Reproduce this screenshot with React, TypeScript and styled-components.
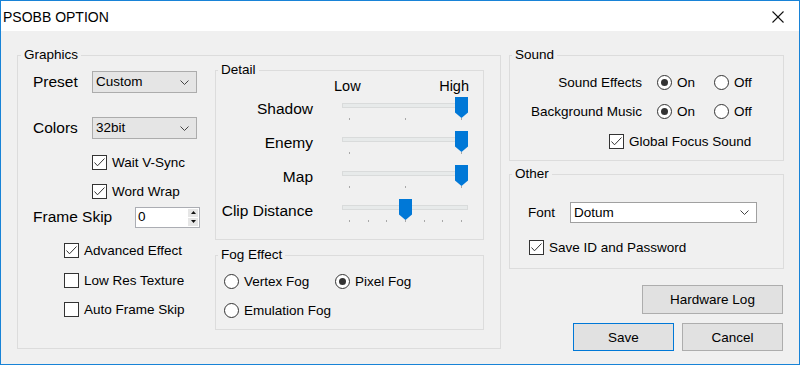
import React from "react";
import styled, { createGlobalStyle } from "styled-components";

const GlobalStyle = createGlobalStyle`
  html, body {
    margin: 0;
    padding: 0;
    background: #f0f0f0;
    overflow: hidden;
  }
  * {
    box-sizing: border-box;
  }
`;

interface SliderProps {
  value: number;
  max: number;
}

const Slider: React.FC<SliderProps> = ({ value, max }) => {
  const center = 7.5 + (value / max) * 112;
  return (
    <Styled_Slider>
      <Styled_Track />
      <Styled_Ticks>
        {Array.from({ length: max + 1 }).map((_, i) => (
          <Styled_Tick key={i} />
        ))}
      </Styled_Ticks>
      <Styled_Thumb style={{ left: center - 6.5 }} />
    </Styled_Slider>
  );
};

const Check: React.FC<{ checked?: boolean; label: string }> = ({
  checked = false,
  label,
}) => (
  <Styled_Option>
    <Styled_CheckBox>
      {checked && (
        <svg width="13" height="13" viewBox="0 0 13 13">
          <polyline
            points="1.5,6.5 4.5,9.8 11.5,2.5"
            fill="none"
            stroke="#333"
            strokeWidth="1"
          />
        </svg>
      )}
    </Styled_CheckBox>
    {label}
  </Styled_Option>
);

const Radio: React.FC<{ on?: boolean; label: string }> = ({
  on = false,
  label,
}) => (
  <Styled_Option>
    <Styled_RadioCircle $on={on} />
    {label}
  </Styled_Option>
);

const Chevron = () => (
  <svg width="9" height="5" viewBox="0 0 9 5">
    <polyline points="0.5,0.5 4.5,4.5 8.5,0.5" fill="none" stroke="#444" strokeWidth="1" />
  </svg>
);

const Select: React.FC<{ value: string; $white?: boolean; width: number }> = ({
  value,
  $white,
  width,
}) => (
  <Styled_Select $white={$white} $width={width}>
    <span>{value}</span>
    <Chevron />
  </Styled_Select>
);

const App: React.FC = () => {
  return (
    <>
      <GlobalStyle />
      <Styled_Window>
        <Styled_TitleBar>
          <span>PSOBB OPTION</span>
          <svg width="12" height="12" viewBox="0 0 12 12">
            <line x1="0.5" y1="0.5" x2="11.5" y2="11.5" stroke="#111" strokeWidth="1.1" />
            <line x1="11.5" y1="0.5" x2="0.5" y2="11.5" stroke="#111" strokeWidth="1.1" />
          </svg>
        </Styled_TitleBar>

        <Styled_Body>
          <Styled_Group $width={484} $height={302}>
            <Styled_Legend $ml={3}>Graphics</Styled_Legend>
            <Styled_GraphicsInner>
              <Styled_LeftColumn>
                <Styled_Row $mt={8} $h={22}>
                  <Styled_BigLabel $w={59}>Preset</Styled_BigLabel>
                  <Select value="Custom" width={105} />
                </Styled_Row>
                <Styled_Row $mt={24} $h={22}>
                  <Styled_BigLabel $w={59}>Colors</Styled_BigLabel>
                  <Select value="32bit" width={105} />
                </Styled_Row>
                <Styled_Row $mt={12} $h={22} $indent={59}>
                  <Check checked label="Wait V-Sync" />
                </Styled_Row>
                <Styled_Row $mt={7} $h={22} $indent={59}>
                  <Check checked label="Word Wrap" />
                </Styled_Row>
                <Styled_Row $mt={4} $h={22}>
                  <Styled_BigLabel $w={102}>Frame Skip</Styled_BigLabel>
                  <Styled_Spin>
                    <Styled_SpinValue>0</Styled_SpinValue>
                    <Styled_SpinButtons>
                      <Styled_SpinArrow>
                        <svg width="5" height="3" viewBox="0 0 5 3">
                          <polygon points="2.5,0 5,3 0,3" fill="#111" />
                        </svg>
                      </Styled_SpinArrow>
                      <Styled_SpinArrow>
                        <svg width="5" height="3" viewBox="0 0 5 3">
                          <polygon points="0,0 5,0 2.5,3" fill="#111" />
                        </svg>
                      </Styled_SpinArrow>
                    </Styled_SpinButtons>
                  </Styled_Spin>
                </Styled_Row>
                <Styled_Row $mt={11} $h={22} $indent={31}>
                  <Check checked label="Advanced Effect" />
                </Styled_Row>
                <Styled_Row $mt={8} $h={22} $indent={31}>
                  <Check label="Low Res Texture" />
                </Styled_Row>
                <Styled_Row $mt={7} $h={22} $indent={31}>
                  <Check label="Auto Frame Skip" />
                </Styled_Row>
              </Styled_LeftColumn>

              <Styled_RightColumn>
                <Styled_Group $width={269} $mt={-1}>
                  <Styled_Legend>Detail</Styled_Legend>
                  <Styled_DetailInner>
                    <Styled_SliderRow $h={17}>
                      <span />
                      <Styled_Scale>
                        <span>Low</span>
                        <span>High</span>
                      </Styled_Scale>
                    </Styled_SliderRow>
                    <Styled_SliderRow $h={34} $mt={2}>
                      <Styled_SliderLabel>Shadow</Styled_SliderLabel>
                      <Slider value={2} max={2} />
                    </Styled_SliderRow>
                    <Styled_SliderRow $h={34}>
                      <Styled_SliderLabel>Enemy</Styled_SliderLabel>
                      <Slider value={1} max={1} />
                    </Styled_SliderRow>
                    <Styled_SliderRow $h={34}>
                      <Styled_SliderLabel>Map</Styled_SliderLabel>
                      <Slider value={2} max={2} />
                    </Styled_SliderRow>
                    <Styled_SliderRow $h={34}>
                      <Styled_SliderLabel>Clip Distance</Styled_SliderLabel>
                      <Slider value={3} max={6} />
                    </Styled_SliderRow>
                  </Styled_DetailInner>
                </Styled_Group>

                <Styled_Group $width={269} $mt={7}>
                  <Styled_Legend>Fog Effect</Styled_Legend>
                  <Styled_FogGrid>
                    <Radio label="Vertex Fog" />
                    <Radio on label="Pixel Fog" />
                    <Radio label="Emulation Fog" />
                  </Styled_FogGrid>
                </Styled_Group>
              </Styled_RightColumn>
            </Styled_GraphicsInner>
          </Styled_Group>

          <Styled_SideColumn>
            <Styled_Group $width={275}>
              <Styled_Legend>Sound</Styled_Legend>
              <Styled_SoundInner>
                <Styled_SoundRow>
                  <Styled_RightLabel>Sound Effects</Styled_RightLabel>
                  <Radio on label="On" />
                  <Radio label="Off" />
                </Styled_SoundRow>
                <Styled_SoundRow>
                  <Styled_RightLabel>Background Music</Styled_RightLabel>
                  <Radio on label="On" />
                  <Radio label="Off" />
                </Styled_SoundRow>
                <Styled_Row $mt={1} $h={20} $indent={99}>
                  <Check checked label="Global Focus Sound" />
                </Styled_Row>
              </Styled_SoundInner>
            </Styled_Group>

            <Styled_Group $width={275} $mt={5}>
              <Styled_Legend>Other</Styled_Legend>
              <Styled_OtherInner>
                <Styled_Row $h={21}>
                  <Styled_FontLabel>Font</Styled_FontLabel>
                  <Select value="Dotum" $white width={187} />
                </Styled_Row>
                <Styled_Row $mt={14} $h={20} $indent={1}>
                  <Check checked label="Save ID and Password" />
                </Styled_Row>
              </Styled_OtherInner>
            </Styled_Group>

            <Styled_ButtonRow $mt={16}>
              <Styled_Button $w={141} $h={29}>
                Hardware Log
              </Styled_Button>
            </Styled_ButtonRow>
            <Styled_ButtonRow $mt={9}>
              <Styled_Button $w={101} $h={28} $primary>
                Save
              </Styled_Button>
              <Styled_Button $w={101} $h={28}>
                Cancel
              </Styled_Button>
            </Styled_ButtonRow>
          </Styled_SideColumn>
        </Styled_Body>
      </Styled_Window>
    </>
  );
};

export default App;

const Styled_Window = styled.div`
  width: 800px;
  height: 365px;
  border: 1px solid #1883d7;
  background: #f0f0f0;
  display: flex;
  flex-direction: column;
  font-family: "Liberation Sans", Arial, sans-serif;
  font-size: 13.5px;
  color: #000;
`;

const Styled_TitleBar = styled.div`
  height: 30px;
  flex: none;
  background: #fff;
  display: flex;
  align-items: center;
  justify-content: space-between;
  padding: 1px 15px 0 2px;
  font-size: 14px;
`;

const Styled_Body = styled.div`
  display: flex;
  gap: 8px;
  padding: 16px 0 0 16px;
`;

const Styled_Group = styled.fieldset<{
  $width: number;
  $height?: number;
  $mt?: number;
}>`
  margin: ${(p) => p.$mt ?? 0}px 0 0 0;
  padding: 0;
  min-width: 0;
  border: 1px solid #dcdcdc;
  width: ${(p) => p.$width}px;
  ${(p) => (p.$height ? `height: ${p.$height}px;` : "")}
`;

const Styled_Legend = styled.legend<{ $ml?: number }>`
  margin-left: ${(p) => p.$ml ?? 2}px;
  padding: 0 3px;
  font-size: 13.5px;
  line-height: 16px;
`;

const Styled_GraphicsInner = styled.div`
  display: flex;
  padding-right: 16px;
`;

const Styled_LeftColumn = styled.div`
  width: 197px;
  padding-left: 15px;
  display: flex;
  flex-direction: column;
`;

const Styled_RightColumn = styled.div`
  width: 269px;
  display: flex;
  flex-direction: column;
`;

const Styled_Row = styled.div<{ $mt?: number; $h: number; $indent?: number }>`
  display: flex;
  align-items: center;
  height: ${(p) => p.$h}px;
  margin-top: ${(p) => p.$mt ?? 0}px;
  padding-left: ${(p) => p.$indent ?? 0}px;
`;

const Styled_BigLabel = styled.span<{ $w: number }>`
  width: ${(p) => p.$w}px;
  font-size: 15.5px;
  flex: none;
`;

const Styled_Select = styled.div<{ $white?: boolean; $width: number }>`
  width: ${(p) => p.$width}px;
  height: 100%;
  display: flex;
  align-items: center;
  justify-content: space-between;
  padding: 0 7px 0 3px;
  background: ${(p) => (p.$white ? "#fff" : "#e5e5e5")};
  border: 1px solid ${(p) => (p.$white ? "#a0a0a0" : "#acacac")};
  font-size: 13.5px;
  line-height: 16px;
`;

const Styled_Option = styled.label`
  display: flex;
  align-items: center;
  gap: 5px;
  font-size: 13.5px;
  white-space: nowrap;
`;

const Styled_CheckBox = styled.span`
  width: 15px;
  height: 15px;
  border: 1px solid #333;
  background: #fff;
  display: flex;
  flex: none;
`;

const Styled_RadioCircle = styled.span<{ $on?: boolean }>`
  width: 15px;
  height: 15px;
  border: 1px solid #333;
  border-radius: 50%;
  background: #fff;
  display: flex;
  flex: none;
  align-items: center;
  justify-content: center;
  &::after {
    content: "";
    width: 7px;
    height: 7px;
    border-radius: 50%;
    background: #333;
    display: ${(p) => (p.$on ? "block" : "none")};
  }
`;

const Styled_Spin = styled.div`
  width: 65px;
  height: 21px;
  border: 1px solid #abadb3;
  background: #fff;
  display: flex;
`;

const Styled_SpinValue = styled.span`
  flex: 1;
  padding-left: 2px;
  line-height: 18px;
`;

const Styled_SpinButtons = styled.div`
  width: 11px;
  display: flex;
  flex-direction: column;
  gap: 1px;
  padding: 1px 1px 1px 0;
`;

const Styled_SpinArrow = styled.div`
  flex: 1;
  background: #e6e6e6;
  display: flex;
  align-items: center;
  justify-content: center;
`;

const Styled_DetailInner = styled.div`
  display: flex;
  flex-direction: column;
  padding-bottom: 6px;
`;

const Styled_SliderRow = styled.div<{ $h: number; $mt?: number }>`
  display: grid;
  grid-template-columns: 97px 126px;
  column-gap: 29px;
  height: ${(p) => p.$h}px;
  margin-top: ${(p) => p.$mt ?? 0}px;
`;

const Styled_Scale = styled.div`
  display: flex;
  justify-content: space-between;
  margin: 0 -1px 0 -8px;
  font-size: 14.5px;
  line-height: 17px;
`;

const Styled_SliderLabel = styled.span`
  text-align: right;
  font-size: 15.5px;
  line-height: 18px;
  margin-top: 3px;
  white-space: nowrap;
`;

const Styled_Slider = styled.div`
  position: relative;
  height: 34px;
`;

const Styled_Track = styled.div`
  margin-top: 6px;
  height: 5px;
  background: #e7eaea;
  border: 1px solid #d9dbdb;
`;

const Styled_Ticks = styled.div`
  display: flex;
  justify-content: space-between;
  padding: 0 6px 0 7px;
  margin-top: 10px;
`;

const Styled_Tick = styled.span`
  width: 1px;
  height: 2px;
  background: #a8a8a8;
`;

const Styled_Thumb = styled.div`
  position: absolute;
  top: 0;
  width: 13px;
  height: 21px;
  background: #0078d7;
  clip-path: polygon(0 0, 100% 0, 100% 74%, 50% 100%, 0 74%);
`;

const Styled_FogGrid = styled.div`
  display: grid;
  grid-template-columns: 111px auto;
  grid-auto-rows: 20px;
  row-gap: 9px;
  padding: 8px 0 9px 8px;
`;

const Styled_SideColumn = styled.div`
  width: 275px;
  display: flex;
  flex-direction: column;
`;

const Styled_SoundInner = styled.div`
  display: flex;
  flex-direction: column;
  gap: 9px;
  padding: 9px 0 9px 0;
`;

const Styled_SoundRow = styled.div`
  display: grid;
  grid-template-columns: 147px 57px auto;
  height: 20px;
  align-items: center;
`;

const Styled_RightLabel = styled.span`
  text-align: right;
  white-space: nowrap;
  padding-right: 15px;
`;

const Styled_OtherInner = styled.div`
  display: flex;
  flex-direction: column;
  padding: 20px 0 11px 18px;
`;

const Styled_FontLabel = styled.span`
  width: 42px;
  flex: none;
`;

const Styled_ButtonRow = styled.div<{ $mt: number }>`
  display: flex;
  justify-content: flex-end;
  gap: 8px;
  margin-top: ${(p) => p.$mt}px;
  padding-right: 1px;
`;

const Styled_Button = styled.div<{ $w: number; $h: number; $primary?: boolean }>`
  width: ${(p) => p.$w}px;
  height: ${(p) => p.$h}px;
  display: flex;
  align-items: center;
  justify-content: center;
  background: #e1e1e1;
  border: 1px solid ${(p) => (p.$primary ? "#0078d7" : "#adadad")};
  font-size: 13.5px;
`;
